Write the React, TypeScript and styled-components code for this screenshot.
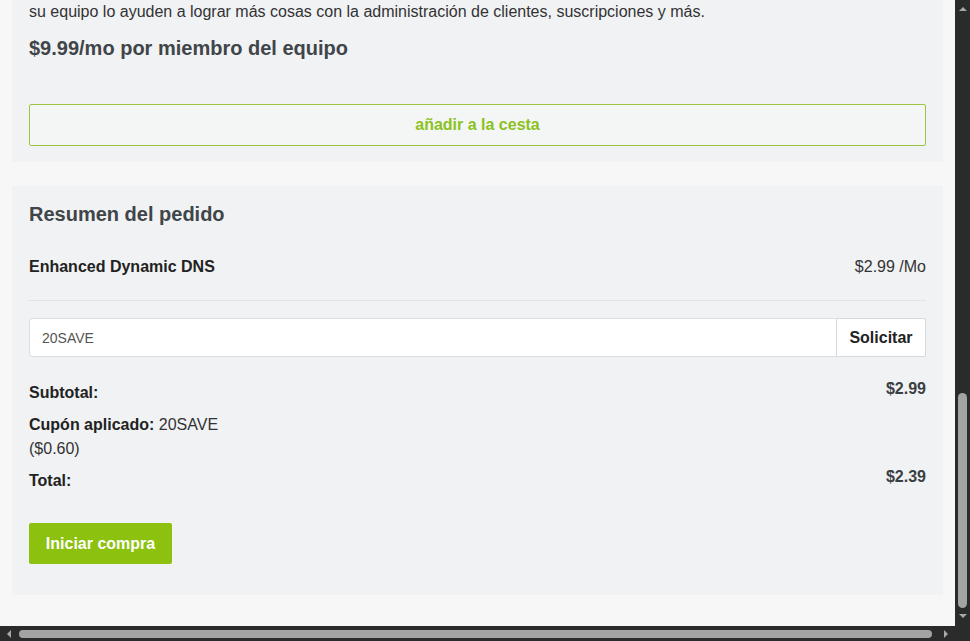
import React from "react";
import styled, { createGlobalStyle } from "styled-components";

const Global = createGlobalStyle`
  html, body { margin: 0; padding: 0; overflow: hidden; }
  body { font-family: "Liberation Sans", Arial, sans-serif; background: #f7f7f7; }
  * { box-sizing: border-box; }
`;

const Frame = styled.div`
  display: grid;
  grid-template-columns: 955px 15px;
  grid-template-rows: 626px 15px;
  width: 970px;
  height: 641px;
  background: #2b2b2b;
`;

const Main = styled.main`
  background: #f7f7f7;
  overflow: hidden;
  padding: 0 12px 0 12px;
  display: flex;
  flex-direction: column;
  gap: 24px;
`;

const Panel = styled.section<{ $pt: number; $pb: number }>`
  background: #f1f2f3;
  padding: ${(p) => p.$pt}px 17px ${(p) => p.$pb}px;
  display: flex;
  flex-direction: column;
`;

const Desc = styled.p`
  margin: 0;
  font-size: 16px;
  line-height: 24px;
  color: #333;
`;

const Price = styled.div`
  margin-top: 10px;
  font-size: 20px;
  font-weight: 700;
  line-height: 28px;
  color: #40454a;
`;

const OutlineButton = styled.button`
  margin-top: 42px;
  height: 42px;
  border: 1px solid #9cc441;
  border-radius: 2px;
  background: #f4f6f6;
  color: #8cc21e;
  font-family: inherit;
  font-size: 16px;
  font-weight: 700;
`;

const Heading = styled.h2`
  margin: 0;
  font-size: 20px;
  line-height: 28px;
  font-weight: 700;
  color: #40454a;
`;

const ItemRow = styled.div`
  margin-top: 27px;
  padding-bottom: 21px;
  border-bottom: 1px solid #e1e3e5;
  display: flex;
  justify-content: space-between;
  font-size: 16px;
  line-height: 24px;
  color: #222;
`;

const ItemName = styled.span`
  font-weight: 700;
`;

const ItemPrice = styled.span`
  color: #333;
`;

const CouponRow = styled.div`
  margin-top: 17px;
  display: flex;
  height: 39px;
`;

const CouponInput = styled.input`
  flex: 1;
  height: 100%;
  border: 1px solid #dcdfe2;
  border-right: none;
  border-radius: 4px 0 0 4px;
  background: #fff;
  padding: 0 12px;
  font-family: inherit;
  font-size: 14px;
  color: #555;
  outline: none;
`;

const ApplyButton = styled.button`
  width: 90px;
  height: 100%;
  border: 1px solid #d6d9dc;
  border-radius: 0 2px 2px 0;
  background: #fff;
  font-family: inherit;
  font-size: 16px;
  font-weight: 700;
  color: #222;
`;

const SumRow = styled.div<{ $mt: number }>`
  margin-top: ${(p) => p.$mt}px;
  display: flex;
  justify-content: space-between;
  align-items: flex-start;
  font-size: 16px;
  line-height: 24px;
  color: #222;
`;

const SumLabel = styled.div`
  margin-top: 4px;
  font-weight: 700;
`;

const SumValue = styled.div`
  font-weight: 700;
  color: #3a3f44;
`;

const CouponText = styled.div`
  margin-top: 8px;
  font-size: 16px;
  line-height: 24px;
  color: #222;
  b { font-weight: 700; }
  span { color: #333; }
`;

const BuyButton = styled.button`
  margin-top: 30px;
  align-self: flex-start;
  width: 143px;
  height: 41px;
  border: none;
  border-radius: 2px;
  background: #8cc10f;
  color: #fff;
  font-family: inherit;
  font-size: 16px;
  font-weight: 700;
`;

const VBar = styled.div`
  background: #2b2b2b;
  display: flex;
  flex-direction: column;
  align-items: center;
  padding: 5px 0 6px;
`;

const VTrack = styled.div`
  flex: 1;
  width: 100%;
  display: flex;
  flex-direction: column;
  align-items: center;
  padding: 0 0 4px;
`;

const VThumb = styled.div`
  margin-top: auto;
  width: 9px;
  height: 215px;
  border-radius: 5px;
  background: #a3a3a3;
`;

const HBar = styled.div`
  background: #2b2b2b;
  display: flex;
  align-items: center;
  padding: 0 5px;
`;

const HThumb = styled.div`
  margin: 0 10px 0 6px;
  flex: 1;
  height: 8px;
  border-radius: 4px;
  background: #a3a3a3;
`;

const Corner = styled.div`
  background: #2b2b2b;
`;

const Arrow = ({ dir }: { dir: "up" | "down" | "left" | "right" }) => {
  const pts: Record<string, string> = {
    up: "1,6 5,2 9,6",
    down: "1,2 5,6 9,2",
    left: "6,1 2,5 6,9",
    right: "2,1 6,5 2,9",
  };
  const vertical = dir === "up" || dir === "down";
  return (
    <svg width={vertical ? 10 : 8} height={vertical ? 8 : 10} viewBox={vertical ? "0 0 10 8" : "0 0 8 10"}>
      <polygon points={pts[dir]} fill="#a8a8a8" />
    </svg>
  );
};

export default function App() {
  return (
    <>
      <Global />
      <Frame>
        <Main>
          <Panel $pt={0} $pb={16}>
            <Desc>
              su equipo lo ayuden a lograr más cosas con la administración de clientes, suscripciones y más.
            </Desc>
            <Price>$9.99/mo por miembro del equipo</Price>
            <OutlineButton>añadir a la cesta</OutlineButton>
          </Panel>
          <Panel $pt={14} $pb={31}>
            <Heading>Resumen del pedido</Heading>
            <ItemRow>
              <ItemName>Enhanced Dynamic DNS</ItemName>
              <ItemPrice>$2.99 /Mo</ItemPrice>
            </ItemRow>
            <CouponRow>
              <CouponInput defaultValue="20SAVE" />
              <ApplyButton>Solicitar</ApplyButton>
            </CouponRow>
            <SumRow $mt={20}>
              <SumLabel>Subtotal:</SumLabel>
              <SumValue>$2.99</SumValue>
            </SumRow>
            <CouponText>
              <b>Cupón aplicado:</b> <span>20SAVE</span>
              <br />
              <span>($0.60)</span>
            </CouponText>
            <SumRow $mt={4}>
              <SumLabel>Total:</SumLabel>
              <SumValue>$2.39</SumValue>
            </SumRow>
            <BuyButton>Iniciar compra</BuyButton>
          </Panel>
        </Main>
        <VBar>
          <Arrow dir="up" />
          <VTrack>
            <VThumb />
          </VTrack>
          <Arrow dir="down" />
        </VBar>
        <HBar>
          <Arrow dir="left" />
          <HThumb />
          <Arrow dir="right" />
        </HBar>
        <Corner />
      </Frame>
    </>
  );
}
